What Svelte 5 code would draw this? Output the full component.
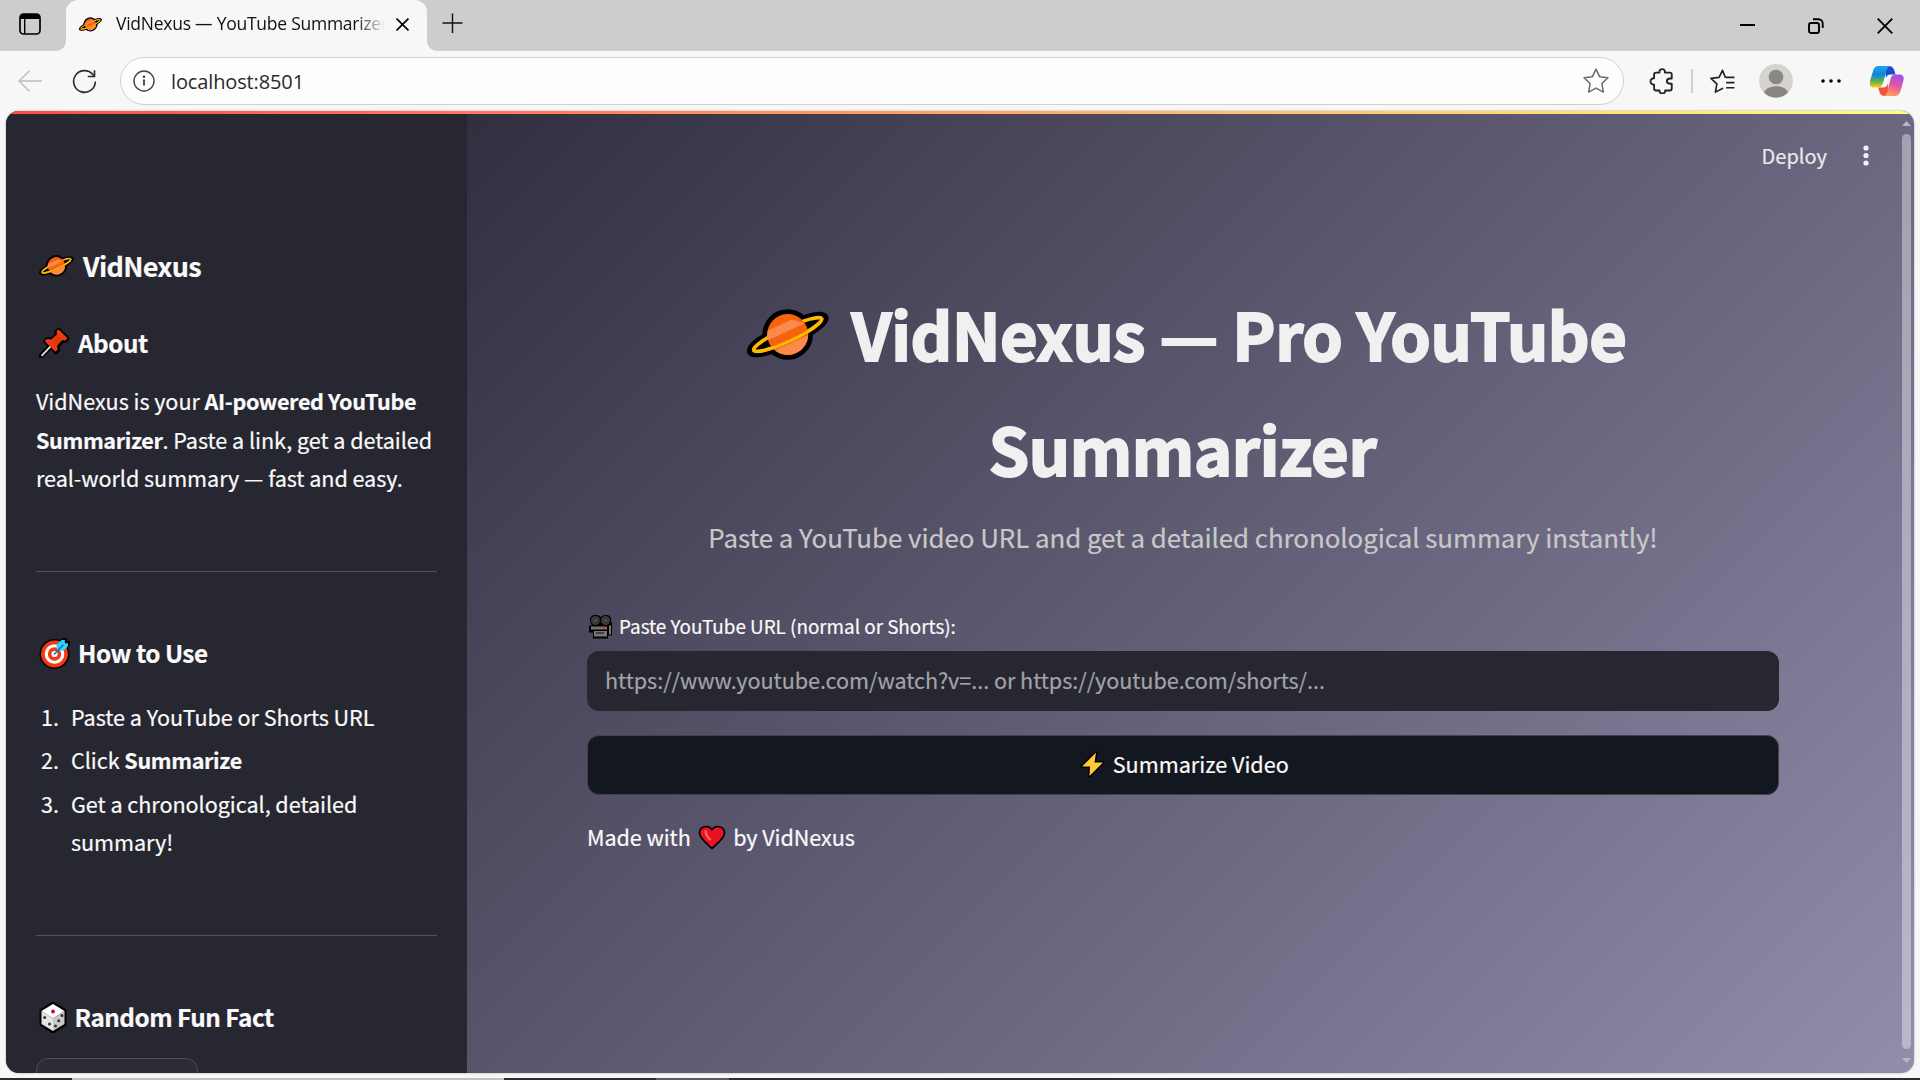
<script>
  const steps = [
    [{ t: 'Paste a YouTube or Shorts URL' }],
    [{ t: 'Click ' }, { t: 'Summarize', b: true }],
    [{ t: 'Get a chronological, detailed summary!' }]
  ];
</script>

{#snippet planet(cls)}
  <svg class={cls} viewBox="0 0 82 52">
    <g transform="translate(40.7 25.5) rotate(-25)">
      <ellipse rx="39" ry="6.5" stroke="#000" stroke-width="11" />
      <circle r="25.3" />
      <ellipse rx="37.5" ry="6.5" fill="none" stroke="#ffb900" stroke-width="3.6" />
      <circle r="20.5" fill="#f7630c" />
      <path d="M-16.6-12H10L20.3-3H-20.3A20.5 20.5 0 0 1-16.6-12ZM18.4 9A20.5 20.5 0 0 1-18.4 9Z" fill="#f98a4b" />
      <path d="M-37.5 0C-37.5 9 37.5 9 37.5 0" fill="none" stroke="#ffb900" stroke-width="3" />
    </g>
  </svg>
{/snippet}

<div class="window">
  <header class="tabbar">
    <svg class="tabmenu" viewBox="0 0 22 22">
      <rect x="1" y="1" width="20" height="20" rx="3.5" fill="none" stroke="#000" stroke-width="1.7" />
      <path d="M1 6V4.5A3.5 3.5 0 0 1 4.500 1h13A3.500 3.500 0 0 1 21 4.500V6Z" />
      <path d="M5.700 6v15" stroke="#000" stroke-width="1.400" />
    </svg>
    <div class="tab">
      <svg class="flare left" viewBox="0 0 10 10"><path d="M10 0V10H0A10 10 0 0 0 10 0Z" fill="#f7f7f7" /></svg>
      {@render planet('fav')}
      <span class="tabtitle">VidNexus — YouTube Summarizer</span>
      <svg class="tabclose" viewBox="0 0 12 12"><path d="M.5.5l11 11M11.500.5l-11 11" stroke="#000" stroke-width="1.500" /></svg>
      <svg class="flare right" viewBox="0 0 10 10"><path d="M0 0V10H10A10 10 0 0 1 0 0Z" fill="#f7f7f7" /></svg>
    </div>
    <svg class="newtab" viewBox="0 0 22 22"><path d="M11 .5v20.500M.5 10.500h21" stroke="#111" stroke-width="1.500" /></svg>
    <div class="wincontrols">
      <svg width="15" height="16" viewBox="0 0 15 16"><path d="M0 7h15" stroke="#000" stroke-width="2" /></svg>
      <svg width="16" height="16" viewBox="0 0 16 16" fill="none" stroke="#000" stroke-width="1.900">
        <rect x="1" y="5" width="10" height="10" rx="2" />
        <path d="M5 1.200h5.500a4.200 4.200 0 0 1 4.200 4.200v4.600" />
      </svg>
      <svg width="16" height="16" viewBox="0 0 16 16"><path d="M.7.700l14.600 14.600M15.300.700L.7 15.300" stroke="#000" stroke-width="1.900" /></svg>
    </div>
  </header>

  <nav class="toolbar">
    <svg class="back" viewBox="0 0 24 22" fill="none" stroke="#bdbdbd" stroke-width="1.500"><path d="M24 11H1M11.500.8L1 11l10.500 10.200" /></svg>
    <svg class="reload" viewBox="0 0 26 26" fill="none" stroke="#2b2b2b" stroke-width="1.700">
      <path d="M24.300 13A11.300 11.300 0 1 1 21.500 5.500L23 7.500" /><path d="M23.400 1.200v6.600h-7" />
    </svg>
    <div class="address">
      <svg class="info" viewBox="0 0 22 22"><circle cx="11" cy="11" r="10" fill="none" stroke="#444" stroke-width="1.400" /><path d="M11 9.500v6" stroke="#333" stroke-width="1.700" /><circle cx="11" cy="6.700" r="1.200" fill="#333" /></svg>
      <span class="url">localhost:8501</span>
      <svg class="star" viewBox="0 0 24 24" fill="none" stroke="#6b6b6b" stroke-width="1.400" stroke-linejoin="round"><path d="M12 1l3.300 7 7.700 1-5.600 5.300 1.400 7.900L12 18.500l-6.800 3.700 1.400-7.900L1 9l7.700-1Z" /></svg>
    </div>
    <svg class="puzzle" viewBox="0 0 24 24" fill="none" stroke="#222" stroke-width="1.700" stroke-linejoin="round">
      <path d="M6.500 4.200H9.700C9 0 15.300 0 14.700 4.200H19.300Q21 4.200 21 6V9.700H19.500C15.500 9.700 15.500 14.500 19.500 14.500H21V19Q21 20.800 19.300 20.800H14.900C15.300 24.500 9.300 24.500 9.700 20.800H6.500Q4.700 20.800 4.700 19V15.300C.3 15.500 .3 9.300 4.700 9.500V6Q4.700 4.200 6.500 4.200Z" />
    </svg>
    <i class="divider"></i>
    <svg class="favs" viewBox="0 0 24 24" fill="none" stroke="#222" stroke-width="1.600" stroke-linejoin="round"><path d="M15 8.600L12 1.300 8.700 8 .9 9l5.700 5.300-1.400 7.900 7.300-3.700M15.500 8h8M15.500 13h8M15.500 18h8" /></svg>
    <svg class="avatar" viewBox="0 0 34 34">
      <circle cx="17" cy="17" r="17" fill="#d5d3cf" /><circle cx="17" cy="13" r="7.300" fill="#8a8683" /><path d="M5 28.500C7.500 20 26.500 20 29 28.500A17 17 0 0 1 5 28.500Z" fill="#8a8683" />
    </svg>
    <svg class="more" viewBox="0 0 20 4"><circle cx="2" cy="2" r="1.800" /><circle cx="10" cy="2" r="1.800" /><circle cx="18" cy="2" r="1.800" /></svg>
    <svg class="copilot" viewBox="0 0 34 30">
      <defs>
        <linearGradient id="cpa" x1="0" y1="0" x2="0" y2="1"><stop offset="0" stop-color="#1ba5ee" /><stop offset=".4" stop-color="#1283da" /><stop offset=".7" stop-color="#52b257" /><stop offset="1" stop-color="#ffd000" /></linearGradient>
        <linearGradient id="cpb" x1=".6" y1="0" x2=".3" y2="1"><stop offset="0" stop-color="#9b52ee" /><stop offset=".45" stop-color="#e552a6" /><stop offset="1" stop-color="#ffa057" /></linearGradient>
      </defs>
      <path d="M15 0H19Q23 0 24.500 5L25.500 8.500H20Q17 8.500 16 12Z" fill="#1b4bd0" />
      <path d="M19 30H14.500Q10.500 30 9.500 26L8 21.500H13Q17 21.500 18 17Z" fill="#f0563c" />
      <path d="M8 0H20Q17.500 1 16.500 5L13 17Q11.500 21.500 8 21.500H4Q-1.500 21.500.3 14L3 5Q4.500 0 8 0Z" fill="url(#cpa)" />
      <path d="M25 8.500H29.500Q35 8.500 33.300 15L30.500 25Q29 30 25 30H14Q16.500 29 17.500 25L20.500 13Q21.500 8.500 25 8.500Z" fill="url(#cpb)" />
    </svg>
  </nav>

  <div class="page">
    <div class="decoration"></div>
    <aside>
      <h2 class="brand">{@render planet('p30')}<span>VidNexus</span></h2>
      <h3 class="about">
        <svg class="em" viewBox="0 0 30 30">
          <path d="M19 2l9 9-2 3-3-.5-4.500 5 .5 4-2.500 2.500-5-5L3 28.500H1.500V27L10 18.500 5.500 14 8 11.500l4 .5 5-4.500L16.500 4.500Z" fill="#000" stroke="#000" stroke-width="3" stroke-linejoin="round" />
          <path d="M19 2.500l8.500 8.500-2 2-3-.5-5 5.500.5 4-2 2L5.500 13.500l2.500-2 4 .5 5.500-5-.5-3Z" fill="#f03a17" />
          <path d="M18 7l5 5-5.500 6-4-4Z" fill="#da3b01" /><path d="M11 19l-8.500 9" stroke="#e8e8e8" stroke-width="1.700" />
        </svg><span>About</span>
      </h3>
      <p>VidNexus is your <b>AI-powered YouTube</b><br /><b>Summarizer</b>. Paste a link, get a detailed<br />real-world summary — fast and easy.</p>
      <hr />
      <h3 class="how">
        <svg class="em" viewBox="0 0 30 30">
          <circle cx="15" cy="15.500" r="14.500" /><path d="M19 8V3l4-3h4v3h3v4l-3 4h-5Z" />
          <circle cx="15" cy="15.500" r="13" fill="#f03a17" /><circle cx="15" cy="15.500" r="9.500" fill="#fff" /><circle cx="15" cy="15.500" r="6.500" fill="#f03a17" /><circle cx="15" cy="15.500" r="3" fill="#fff" />
          <path d="M17 11V6l5-4h3v3h3v3l-4 4h-5Z" fill="#31d2f7" /><path d="M14.500 16l9-9.500" stroke="#0078d4" stroke-width="1.600" />
        </svg><span>How to Use</span>
      </h3>
      <ol>
        {#each steps as parts, i}
          <li><span class="num">{i + 1}.</span><span>{#each parts as p}{#if p.b}<b>{p.t}</b>{:else}{p.t}{/if}{/each}</span></li>
        {/each}
      </ol>
      <hr />
      <h3 class="fact">
        <svg class="em dice" viewBox="0 0 28 31">
          <path d="M14 1l12 7.500v14L14 30 2 22.500v-14Z" stroke="#000" stroke-width="3" stroke-linejoin="round" />
          <path d="M14 2l11.500 7L14 16.500 2.500 9Z" fill="#fff" /><path d="M2.500 9L14 16.500V29L2.500 22Z" fill="#e3e3e3" /><path d="M25.500 9L14 16.500V29l11.500-7Z" fill="#c8c8c8" />
          <circle cx="14" cy="9.500" r="1.900" fill="#c50f1f" />
          <g fill="#333"><circle cx="5.700" cy="15.500" r="1.500" /><circle cx="10.500" cy="22" r="1.500" /><circle cx="23" cy="13.500" r="1.500" /><circle cx="19.700" cy="18.700" r="1.500" /><circle cx="16.500" cy="24" r="1.500" /></g>
        </svg><span>Random Fun Fact</span>
      </h3>
      <div class="factbtn"></div>
    </aside>

    <main>
      <div class="topline">
        <span class="deploy">Deploy</span>
        <svg class="kebab" viewBox="0 0 6 21"><circle cx="3" cy="3" r="2.600" /><circle cx="3" cy="10.500" r="2.600" /><circle cx="3" cy="18" r="2.600" /></svg>
      </div>
      <div class="content">
        <h1>
          <span class="row">{@render planet('big')}<span class="line1">VidNexus — Pro YouTube</span></span>
          <span class="row line2">Summarizer</span>
        </h1>
        <div class="subtitle"><span>Paste a YouTube video URL and get a detailed chronological summary instantly!</span></div>
        <div class="label">
          <svg class="cam" viewBox="0 0 24 24">
            <path d="M1 7Q0 1 6 .5 10 0 12 2.500 14 0 18 .5 23 1 22 7L23 9V21H19V24H4V18H0V11H3Z" />
            <circle cx="6.500" cy="6" r="4.500" fill="#3b3a39" /><circle cx="16.500" cy="6" r="4.500" fill="#3b3a39" />
            <path d="M2 12h16v3H2zM20 11h2v9h-2z" fill="#777573" /><path d="M5 16.500h13V22H5z" fill="#7a7876" /><path d="M7 18.500h8" stroke="#222" stroke-width="1.300" /><circle cx="15.500" cy="13" r="1" fill="#e81224" /><circle cx="6.500" cy="6" r=".8" fill="#777" /><circle cx="16.500" cy="6" r=".8" fill="#777" />
          </svg><span>Paste YouTube URL (normal or Shorts):</span>
        </div>
        <div class="input"><span>https://www.youtube.com/watch?v=... or https://youtube.com/shorts/...</span></div>
        <div class="button">
          <svg class="bolt" viewBox="0 0 25 27"><path d="M16 1.500L2 15.500h8L9.500 25 23 11.500H14.500Z" fill="#ffc83d" stroke="#000" stroke-width="3" stroke-linejoin="round" paint-order="stroke" /></svg><span>Summarize Video</span>
        </div>
        <div class="made">
          <span class="m1">Made with</span><svg class="heart" viewBox="0 0 28 25"><path d="M14 23.500C10 19.500 1.500 13.500 1.500 8 1.500 1 10.500-.5 14 4.500 17.500-.5 26.500 1 26.500 8 26.500 13.500 18 19.500 14 23.500Z" fill="#e81224" stroke="#000" stroke-width="1.700" /><path d="M7.500 6Q8 11 12 14.500" fill="none" stroke="#f4715a" stroke-width="2.200" stroke-linecap="round" /></svg><span class="m2">by VidNexus</span>
        </div>
      </div>
    </main>

    <div class="scroll">
      <svg viewBox="0 0 9 5"><path d="M0 5L4.500 0 9 5Z" /></svg>
      <div class="thumb"></div>
      <svg viewBox="0 0 9 5"><path d="M0 0L4.500 5 9 0Z" /></svg>
    </div>
  </div>
  <div class="taskbar"><i class="t1"></i><i class="t2"></i></div>
</div>

<style>
  :global(body) { margin: 0; overflow: hidden; }
  * { box-sizing: border-box; }
  svg { display: block; flex: none; }
  .window { width: 1920px; height: 1080px; background: #f7f7f7; display: flex; flex-direction: column; overflow: hidden; font-family: 'Noto Sans CJK SC', 'Noto Sans CJK JP', sans-serif; }

  .tabbar { height: 51px; flex: none; background: #cdcdcd; display: flex; align-items: center; }
  .tabmenu { width: 22px; height: 22px; margin: 0 25px 3px 19px; }
  .tab { position: relative; width: 361px; height: 51px; background: #f7f7f7; border-radius: 12px 12px 0 0; display: flex; align-items: center; padding: 0 18px 3px 13px; }
  .flare { position: absolute; bottom: 0; width: 10px; height: 10px; }
  .left { left: -10px; }
  .right { right: -10px; }
  .fav { width: 23px; height: 17px; margin-right: 14px; }
  .tabtitle { width: 268px; margin-bottom: 2px; font: 17.500px/24px 'Open Sans', sans-serif; letter-spacing: -0.250px; color: #111; white-space: nowrap; overflow: hidden; mask-image: linear-gradient(90deg, #000 240px, transparent 269px); }
  .tabclose { width: 13px; height: 13px; margin-left: auto; margin-top: 1px; }
  .newtab { width: 21px; height: 21px; margin: 0 0 4px 15px; }
  .wincontrols { margin-left: auto; display: flex; gap: 53px; align-items: center; padding-right: 27px; }

  .toolbar { height: 60px; flex: none; display: flex; align-items: center; padding: 0 14px 0 18px; }
  .back { width: 24px; height: 22px; margin: 0 30px 1px 0; }
  .reload { width: 25px; height: 25px; margin-right: 23px; }
  .address { width: 1504px; height: 48px; border: 1.500px solid #d0d0d0; border-radius: 24px; background: #fdfdfd; display: flex; align-items: center; padding: 0 14px 0 12px; }
  .info { width: 22px; height: 22px; margin-right: 16px; }
  .url { margin-top: 1px; font: 20px/30px 'Open Sans', sans-serif; letter-spacing: -0.130px; color: #2a2a2a; }
  .star { width: 26px; height: 26px; margin-left: auto; }
  .puzzle { width: 26px; height: 26px; margin-left: 25px; }
  .divider { width: 2px; height: 24px; background: #d0d0d0; margin: 0 17px 0 16px; }
  .favs { width: 25px; height: 25px; }
  .avatar { width: 34px; height: 34px; margin-left: 24px; }
  .more { width: 20px; height: 4px; margin: 0 29px 0 28px; }
  .copilot { width: 34px; height: 30px; }

  .page { position: relative; width: 1908px; height: 962px; margin-left: 6px; flex: none; display: flex; overflow: hidden; border-radius: 13px; background: linear-gradient(135deg, #1f1c2c, #928dab); color: #fafafa; box-shadow: 0 0 2px #999; -webkit-text-stroke: 0.200px currentColor; }
  .decoration { position: absolute; inset: 0 0 auto; height: 3px; background: linear-gradient(90deg, #ff4b4b, #fffd80); }

  aside { width: 461px; flex: none; background: #262730; padding: 0 30px; font-size: 21.600px; line-height: 38.400px; letter-spacing: -0.050px; }
  h1, h2, h3, p, ol { margin: 0; padding: 0; font-weight: inherit; }
  h2, h3 { display: flex; align-items: center; height: 40px; line-height: 40px; font-weight: 700; white-space: nowrap; letter-spacing: -0.500px; }
  b { letter-spacing: -0.380px; }
  .brand { margin-top: 135px; font-size: 27px; letter-spacing: -0.700px; }
  .p30 { width: 35px; height: 22px; margin: 0 9px 0 3px; }
  h3 { font-size: 24.300px; }
  .about { margin-top: 36.500px; }
  .em { width: 31px; height: 31px; margin: 0 8px 0 3px; }
  p { margin-top: 19.900px; white-space: nowrap; }
  hr { border: 0; height: 1px; background: #51525a; margin: 0; }
  p + hr { margin-top: 73.600px; }
  .how { margin-top: 61px; }
  ol { margin-top: 25px; list-style: none; }
  li { display: flex; margin-bottom: 4.800px; }
  .num { width: 35px; padding-left: 5px; flex: none; }
  ol + hr { margin-top: 73.500px; }
  .fact { margin-top: 61.500px; }
  .dice { width: 28px; height: 31px; margin-right: 7.500px; }
  .factbtn { width: 162px; height: 60px; margin-top: 21px; border: 1px solid #4e4f58; border-radius: 12px; background: #2b2c36; }

  main { flex: 1; min-width: 0; }
  .topline { height: 91px; display: flex; justify-content: flex-end; align-items: center; gap: 36px; padding: 0 33px 2px 0; color: #e9e9ec; }
  .deploy { font-size: 20px; line-height: 30px; }
  .kebab { width: 6px; height: 21px; fill: #f2f2f4; }
  .content { width: 1192px; margin: 74px 0 0 120px; display: flex; flex-direction: column; }
  h1 { color: #f0f0f0; font-size: 64.800px; line-height: 115.200px; font-weight: 700; letter-spacing: -0.350px; -webkit-text-stroke: 2px currentColor; }
  .row { display: flex; justify-content: center; align-items: center; height: 115.200px; white-space: nowrap; }
  .line2 { padding-right: 1px; }
  .big { width: 82px; height: 52px; margin: 0 22px -3px 8px; }
  .subtitle { height: 46px; margin-top: 8px; text-align: center; color: #c8c8c8; font-size: 25.900px; line-height: 46px; letter-spacing: -0.055px; white-space: nowrap; }
  .label { height: 34px; margin-top: 49px; display: flex; align-items: center; padding-left: 2px; font-size: 18.900px; line-height: 34px; letter-spacing: -0.030px; }
  .cam { width: 24px; height: 27px; margin-right: 6px; }
  .input { height: 60px; margin-top: 8px; border-radius: 12px; background: #262730; display: flex; align-items: center; padding: 0 18px 3px; font-size: 21.600px; letter-spacing: -0.045px; color: #a3a3a8; white-space: nowrap; }
  .button { height: 60px; margin-top: 24px; border: 1px solid #41434b; border-radius: 12px; background: #131720; display: flex; justify-content: center; align-items: center; padding: 0 0 3px 3px; font-size: 21.600px; }
  .bolt { width: 25px; height: 27px; margin: 2px 7.500px 0 0; }
  .made { display: flex; align-items: center; height: 38px; margin-top: 23px; font-size: 21.600px; line-height: 38px; letter-spacing: -0.080px; }
  .heart { width: 28px; height: 25px; margin: 0 7px 0 7.500px; }

  .scroll { width: 12px; padding: 10px 3px 10px 0; display: flex; flex-direction: column; align-items: center; fill: #b9b6c6; }
  .scroll svg { width: 9px; height: 5px; }
  .thumb { flex: 1; width: 9px; margin: 8px 0 9px; border-radius: 5px; background: rgba(255, 255, 255, 0.380); }

  .taskbar { height: 2px; margin-top: 5px; flex: none; background: #2d2b2d; display: flex; }
  .t1 { width: 432px; margin-left: 72px; background: #c0c0c0; }
  .t2 { width: 73px; margin-left: 152px; background: #5c5a5c; }
</style>
